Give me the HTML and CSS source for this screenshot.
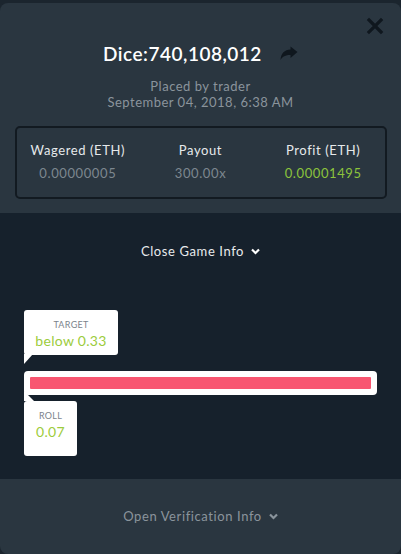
FILE: index.html
```html
<!DOCTYPE html>
<html>
<head>
<meta charset="utf-8">
<link rel="stylesheet" href="styles.css">
</head>
<body>
<div class="modal">
  <section class="head">
    <button class="close" aria-label="Close">
      <svg width="18" height="18" viewBox="0 0 18 18"><path d="M3 3L15 15M15 3L3 15" stroke="#0f171e" stroke-width="3.2" stroke-linecap="square"/></svg>
    </button>
    <div class="title-row">
      <h1 class="title">Dice:740,108,012</h1>
      <svg class="share" width="18" height="15" viewBox="0 0 18 15"><path d="M17.5 6L10.5 0.5V3.6C4.5 3.8 1 7.5 0.5 14C2.5 10.3 5.5 8.9 10.5 8.9V12Z" fill="#0f171e"/></svg>
    </div>
    <p class="meta">Placed by trader</p>
    <p class="meta">September 04, 2018, 6:38 AM</p>
    <div class="stats">
      <div class="stat">
        <div class="stat-label">Wagered (ETH)</div>
        <div class="stat-value">0.00000005</div>
      </div>
      <div class="stat">
        <div class="stat-label">Payout</div>
        <div class="stat-value">300.00x</div>
      </div>
      <div class="stat">
        <div class="stat-label">Profit (ETH)</div>
        <div class="stat-value green">0.00001495</div>
      </div>
    </div>
  </section>
  <section class="game">
    <div class="toggle light">Close Game Info
      <svg class="chev" width="9" height="7" viewBox="0 0 9 7"><path d="M1 1.5L4.5 5L8 1.5" stroke="#fff" stroke-width="2.2" fill="none"/></svg>
    </div>
    <div class="slider">
      <div class="tip tip-up">
        <div class="tip-label">TARGET</div>
        <div class="tip-value">below 0.33</div>
      </div>
      <div class="track"><div class="fill"></div></div>
      <div class="tip tip-down">
        <div class="tip-label">ROLL</div>
        <div class="tip-value">0.07</div>
      </div>
    </div>
  </section>
  <section class="foot">
    <div class="toggle dim">Open Verification Info
      <svg class="chev" width="9" height="7" viewBox="0 0 9 7"><path d="M1 1.5L4.5 5L8 1.5" stroke="#8a949c" stroke-width="2.2" fill="none"/></svg>
    </div>
  </section>
</div>
</body>
</html>
```
FILE: styles.css
```css
* { box-sizing: border-box; }
html, body { margin: 0; padding: 0; }
body {
  background: #1b252e;
  width: 401px;
  height: 554px;
  overflow: hidden;
  font-family: Lato, "Open Sans", sans-serif;
}
.modal {
  margin-top: 3px;
  width: 401px;
  height: 551px;
  border-radius: 8px;
  overflow: hidden;
  display: flex;
  flex-direction: column;
}
.head {
  position: relative;
  background: #2a3640;
  height: 210px;
  padding-top: 39px;
  display: flex;
  flex-direction: column;
  align-items: center;
}
.close {
  position: absolute;
  top: 14px;
  right: 17px;
  background: none;
  border: 0;
  padding: 0;
  width: 18px;
  height: 18px;
}
.title-row {
  display: flex;
  align-items: center;
  gap: 18px;
}
.title {
  margin: 0;
  color: #fff;
  font-size: 19px;
  font-weight: 600;
  letter-spacing: 0.5px;
  line-height: 24px;
}
.share { margin-top: -2px; }
.meta {
  margin: 0;
  color: #8a949c;
  font-size: 13px;
  line-height: 16px;
  letter-spacing: 0.5px;
}
.title-row + .meta { margin-top: 12px; }
.stats {
  margin-top: 16px;
  width: 372px;
  height: 73px;
  border: 2px solid #121a21;
  border-radius: 5px;
  display: grid;
  grid-template-columns: 1fr 1fr 1fr;
  padding-top: 14px;
}
.stat { text-align: center; }
.stat-label {
  color: #e6e9eb;
  font-size: 13px;
  line-height: 16px;
  letter-spacing: 0.6px;
}
.stat-value {
  margin-top: 7px;
  color: #7d878f;
  font-size: 13px;
  line-height: 16px;
  letter-spacing: 0.6px;
}
.stat-value.green { color: #8cc43c; }
.game {
  background: #16212c;
  flex: 1;
  padding-top: 30px;
}
.toggle {
  display: flex;
  justify-content: center;
  align-items: center;
  gap: 7px;
  font-size: 13px;
  line-height: 16px;
  letter-spacing: 0.6px;
}
.light { color: #e8ebed; }
.dim { color: #8a949c; }
.slider {
  margin-top: 51px;
  padding: 0 24px 0 24px;
}
.tip {
  position: relative;
  background: #fff;
  border-radius: 3px;
  text-align: center;
}
.tip-up {
  width: 94px;
  height: 45px;
  padding-top: 9px;
}
.tip-up::after {
  content: "";
  position: absolute;
  left: 0;
  top: 44px;
  border-left: 9px solid #fff;
  border-bottom: 10px solid transparent;
}
.tip-down {
  margin-top: 6px;
  width: 53px;
  height: 55px;
  padding-top: 9px;
}
.tip-down::before {
  content: "";
  position: absolute;
  left: 0;
  top: -10px;
  border-left: 10px solid #fff;
  border-top: 10px solid transparent;
}
.tip-label {
  color: #7b838c;
  font-size: 9px;
  line-height: 11px;
  letter-spacing: 0.3px;
}
.tip-value {
  margin-top: 2px;
  color: #9ccc3c;
  font-size: 14px;
  line-height: 17px;
  letter-spacing: 0.3px;
}
.track {
  margin-top: 16px;
  height: 24px;
  background: #fff;
  border-radius: 4px;
  padding: 6px;
}
.fill {
  height: 12px;
  background: #f85671;
  border-radius: 1px;
}
.foot {
  background: #2a3640;
  height: 75px;
  padding-top: 29px;
}
```
